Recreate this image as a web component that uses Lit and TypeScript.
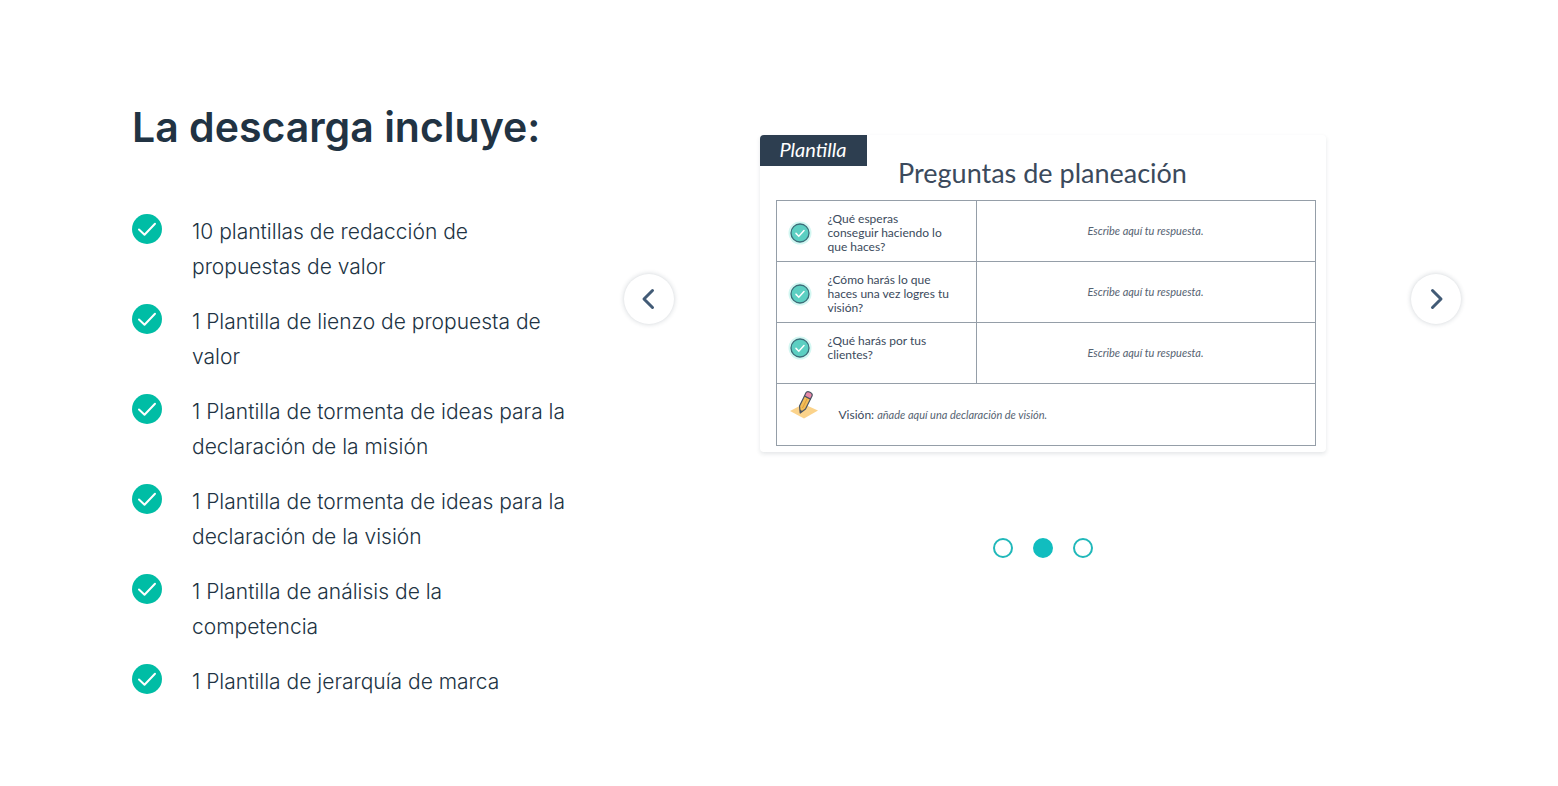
import { LitElement, html, css, svg } from "lit";
import { customElement, state } from "lit/decorators.js";

const ITEMS = [
  "10 plantillas de redacción de propuestas de valor",
  "1 Plantilla de lienzo de propuesta de valor",
  "1 Plantilla de tormenta de ideas para la declaración de la misión",
  "1 Plantilla de tormenta de ideas para la declaración de la visión",
  "1 Plantilla de análisis de la competencia",
  "1 Plantilla de jerarquía de marca",
];

const QUESTIONS = [
  "¿Qué esperas conseguir haciendo lo que haces?",
  "¿Cómo harás lo que haces una vez logres tu visión?",
  "¿Qué harás por tus clientes?",
];

@customElement("template-card")
export class TemplateCard extends LitElement {
  static styles = css`
    :host {
      display: block;
      position: relative;
      box-sizing: border-box;
      padding: 23px 10px 6px 16px;
      background: #fff;
      border-radius: 4px;
      box-shadow: 0 2px 4px rgba(33, 51, 67, 0.12);
      color: #3b4a5c;
      font-family: Lato, sans-serif;
    }
    .badge {
      position: absolute;
      top: 0;
      left: 0;
      box-sizing: border-box;
      width: 107px;
      height: 31px;
      border-radius: 4px 0 0 0;
      background: #2d3e50;
      color: #fff;
      font-size: 20px;
      font-style: italic;
      line-height: 28px;
      text-align: center;
    }
    .title {
      margin: 0 6px 12px 0;
      font-size: 27px;
      font-weight: 400;
      line-height: 30px;
      text-align: center;
    }
    table {
      width: 100%;
      border-collapse: collapse;
      table-layout: fixed;
      font-size: 12px;
      line-height: 14px;
    }
    .narrow {
      width: 200px;
    }
    th,
    td {
      box-sizing: border-box;
      height: 61px;
      padding: 0;
      border: 1px solid #959ea8;
      font-weight: 400;
      text-align: left;
    }
    th {
      vertical-align: top;
    }
    .question {
      display: flex;
      align-items: center;
      gap: 16px;
      padding: 11px 25px 0 11px;
    }
    .check {
      flex: none;
      width: 24px;
      height: 24px;
    }
    .answer {
      color: #566372;
      font-size: 11px;
      font-style: italic;
      text-align: center;
    }
    .vision {
      display: flex;
      gap: 20px;
      height: 61px;
      align-items: center;
      padding-left: 12px;
    }
    .pencil {
      align-self: flex-start;
      width: 30px;
      height: 30px;
      margin-top: 6px;
    }
    .hint {
      color: #566372;
      font-size: 11px;
      font-style: italic;
    }
  `;

  private check = svg`<svg class="check" viewBox="0 0 24 24" aria-hidden="true">
    <circle cx="12" cy="12" r="11.5" fill="#d3f7f2" />
    <circle cx="12" cy="12" r="9" fill="#5ccfc2" stroke="#3b6d78" stroke-width="1.3" />
    <path d="M8 12.4l2.8 2.8 5.2-5.6" fill="none" stroke="#fff" stroke-width="1.5" stroke-linecap="round" />
  </svg>`;

  render() {
    return html`
      <span class="badge">Plantilla</span>
      <h3 class="title">Preguntas de planeación</h3>
      <table>
        <colgroup><col class="narrow" /><col /></colgroup>
        <tbody>
          ${QUESTIONS.map(
            (q) => html`<tr>
              <th scope="row"><div class="question">${this.check}<span>${q}</span></div></th>
              <td class="answer">Escribe aquí tu respuesta.</td>
            </tr>`
          )}
          <tr>
            <td colspan="2">
              <div class="vision">
                <svg class="pencil" viewBox="0 0 30 30" aria-hidden="true">
                  <path d="M1 21L14.500 14 29 20.500 15 28.500z" fill="#fbd38b" />
                  <path d="M10.500 16L15.500 6 21.500 9 16.500 19 11.200 23z" fill="#f5be57" stroke="#4a5361" stroke-width="1.200" stroke-linejoin="round" />
                  <path d="M13.500 18L18.500 8" stroke="#d99b3e" stroke-width="1" />
                  <path d="M15.500 6L16.800 3Q18 .8 21 2.200T23 6L21.500 9z" fill="#e889a8" stroke="#4a5361" stroke-width="1.200" />
                  <path d="M10.800 19.500L13.600 21.200 11.200 23z" fill="#4a5361" />
                </svg>
                <span>Visión: <i class="hint">añade aquí una declaración de visión.</i></span>
              </div>
            </td>
          </tr>
        </tbody>
      </table>
    `;
  }
}

@customElement("app-root")
export class AppRoot extends LitElement {
  @state() private current = 1;

  static styles = css`
    :host {
      display: block;
      background: #fff;
      color: #213343;
      font-family: Inter, "Open Sans", sans-serif;
    }
    .section {
      display: grid;
      grid-template-columns: minmax(0, 436fr) minmax(0, 837fr);
      gap: 56px;
      padding: 100px 97px 86px 132px;
    }
    .heading {
      margin: 0 0 60px;
      font-size: 41px;
      font-weight: 600;
      line-height: 54px;
      white-space: nowrap;
    }
    .list {
      display: grid;
      gap: 20px;
      margin: 0;
      padding: 0;
      list-style: none;
    }
    .item {
      display: flex;
      gap: 30px;
      font-size: 21px;
      font-weight: 300;
      line-height: 35px;
    }
    .tick {
      flex: none;
      width: 30px;
      height: 30px;
    }
    .carousel {
      padding-top: 35px;
    }
    .stage {
      display: flex;
      align-items: center;
      justify-content: space-between;
      gap: 24px;
    }
    .slide {
      flex: 0 1 566px;
      padding-bottom: 11px;
    }
    button {
      padding: 0;
      cursor: pointer;
    }
    .arrow {
      display: grid;
      place-items: center;
      flex: none;
      width: 50px;
      height: 50px;
      border: 0;
      border-radius: 50%;
      background: #fff;
      box-shadow: 0 0 5px rgba(33, 51, 67, 0.22);
    }
    .arrow svg {
      width: 24px;
      height: 24px;
    }
    .dots {
      display: flex;
      justify-content: center;
      gap: 20px;
      margin-top: 75px;
    }
    .dot {
      width: 20px;
      height: 20px;
      border: 2px solid #20b8ba;
      border-radius: 50%;
      background: #fff;
    }
    .dot[aria-current="true"] {
      border-color: #11bdbf;
      background: #11bdbf;
    }
  `;

  private go(step: number) {
    this.current = (this.current + step + 3) % 3;
  }

  render() {
    return html`
      <section class="section">
        <div>
          <h2 class="heading">La descarga incluye:</h2>
          <ul class="list">
            ${ITEMS.map(
              (text) => html`<li class="item">
                <svg class="tick" viewBox="0 0 30 30" aria-hidden="true">
                  <circle cx="15" cy="15" r="15" fill="#00bda5" />
                  <path d="M7 15.500l5.500 5.300L23 9.800" fill="none" stroke="#fff" stroke-width="2" stroke-linecap="round" stroke-linejoin="round" />
                </svg>
                <span>${text}</span>
              </li>`
            )}
          </ul>
        </div>
        <div class="carousel">
          <div class="stage">
            <button class="arrow" aria-label="Anterior" @click=${() => this.go(-1)}>
              <svg viewBox="0 0 24 24" fill="none" stroke="#425b76" stroke-width="3" stroke-linecap="round" stroke-linejoin="round">
                <path d="M15.500 3.500L7 12l8.500 8.500" />
              </svg>
            </button>
            <div class="slide"><template-card></template-card></div>
            <button class="arrow" aria-label="Siguiente" @click=${() => this.go(1)}>
              <svg viewBox="0 0 24 24" fill="none" stroke="#425b76" stroke-width="3" stroke-linecap="round" stroke-linejoin="round">
                <path d="M8.500 3.500L17 12l-8.500 8.500" />
              </svg>
            </button>
          </div>
          <div class="dots">
            ${[0, 1, 2].map(
              (i) => html`<button
                class="dot"
                aria-label="Diapositiva ${i + 1}"
                aria-current=${i === this.current ? "true" : "false"}
                @click=${() => (this.current = i)}
              ></button>`
            )}
          </div>
        </div>
      </section>
    `;
  }
}
